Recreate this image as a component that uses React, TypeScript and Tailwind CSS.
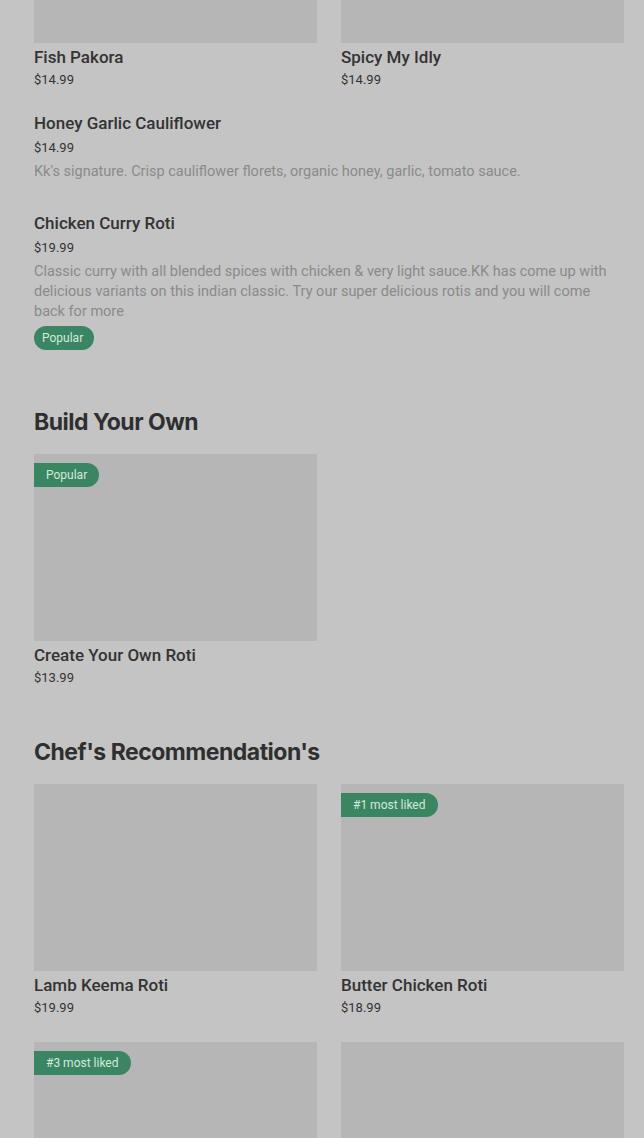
const body = { fontFamily: "Roboto, 'Liberation Sans', sans-serif" };
const head = { fontFamily: "Inter, 'Liberation Sans', sans-serif" };

interface Item {
  name?: string;
  price?: string;
  badge?: string;
}

function Badge({ label, flat }: { label: string; flat?: boolean }) {
  return (
    <span
      className={`inline-flex h-6 items-center bg-[#3b8662] text-[12px] text-[#d3e9de] ${
        flat ? "rounded-r-full pl-3 pr-3" : "rounded-full pl-2 pr-[11px]"
      }`}
    >
      {label}
    </span>
  );
}

function Card({ item }: { item: Item }) {
  return (
    <div className="flex flex-col">
      <div className="relative h-[187px] bg-[#b6b6b6]">
        {item.badge && (
          <div className="absolute left-0 top-2">
            <Badge label={item.badge} flat />
          </div>
        )}
      </div>
      {item.name && (
        <>
          <div className="mt-[2px] text-[17px] font-medium leading-6 text-[#333]">{item.name}</div>
          <div className="mt-px text-[13px] leading-5 text-[#333]">{item.price}</div>
        </>
      )}
    </div>
  );
}

function Section({ title, items, top }: { title: string; items: Item[]; top: string }) {
  return (
    <section className={top}>
      <h2 style={head} className="text-[23px] font-bold leading-8 tracking-[-0.5px] text-[#2f2f2f]">
        {title}
      </h2>
      <div className="mt-4 grid grid-cols-2 gap-x-6 gap-y-6">
        {items.map((it, i) => (
          <Card key={i} item={it} />
        ))}
      </div>
    </section>
  );
}

export default function App() {
  return (
    <div style={body} className="h-[1138px] overflow-hidden bg-[#c4c4c4] pl-[34px] pr-5">
      <div className="-mt-[144px] grid grid-cols-2 gap-x-6">
        <Card item={{ name: "Fish Pakora", price: "$14.99" }} />
        <Card item={{ name: "Spicy My Idly", price: "$14.99" }} />
      </div>

      <div className="mt-[21px]">
        <div className="text-[17px] font-medium leading-6 text-[#333]">Honey Garlic Cauliflower</div>
        <div className="mt-px text-[13px] leading-6 text-[#333]">$14.99</div>
        <p className="mt-0.5 text-[14.5px] leading-5 text-[#8a8a8a]">
          Kk's signature. Crisp cauliflower florets, organic honey, garlic, tomato sauce.
        </p>
      </div>

      <div className="mt-[29px]">
        <div className="text-[17px] font-medium leading-6 text-[#333]">Chicken Curry Roti</div>
        <div className="mt-px text-[13px] leading-6 text-[#333]">$19.99</div>
        <p className="mt-0.5 pr-2 text-[14.5px] leading-5 text-[#8a8a8a]">
          Classic curry with all blended spices with chicken &amp; very light sauce.KK has come up with delicious
          variants on this indian classic. Try our super delicious rotis and you will come back for more
        </p>
        <div className="mt-[3px]">
          <Badge label="Popular" />
        </div>
      </div>

      <Section
        top="mt-[56px]"
        title="Build Your Own"
        items={[{ name: "Create Your Own Roti", price: "$13.99", badge: "Popular" }]}
      />

      <Section
        top="mt-[48px]"
        title="Chef's Recommendation's"
        items={[
          { name: "Lamb Keema Roti", price: "$19.99" },
          { name: "Butter Chicken Roti", price: "$18.99", badge: "#1 most liked" },
          { badge: "#3 most liked" },
          {},
        ]}
      />
    </div>
  );
}
